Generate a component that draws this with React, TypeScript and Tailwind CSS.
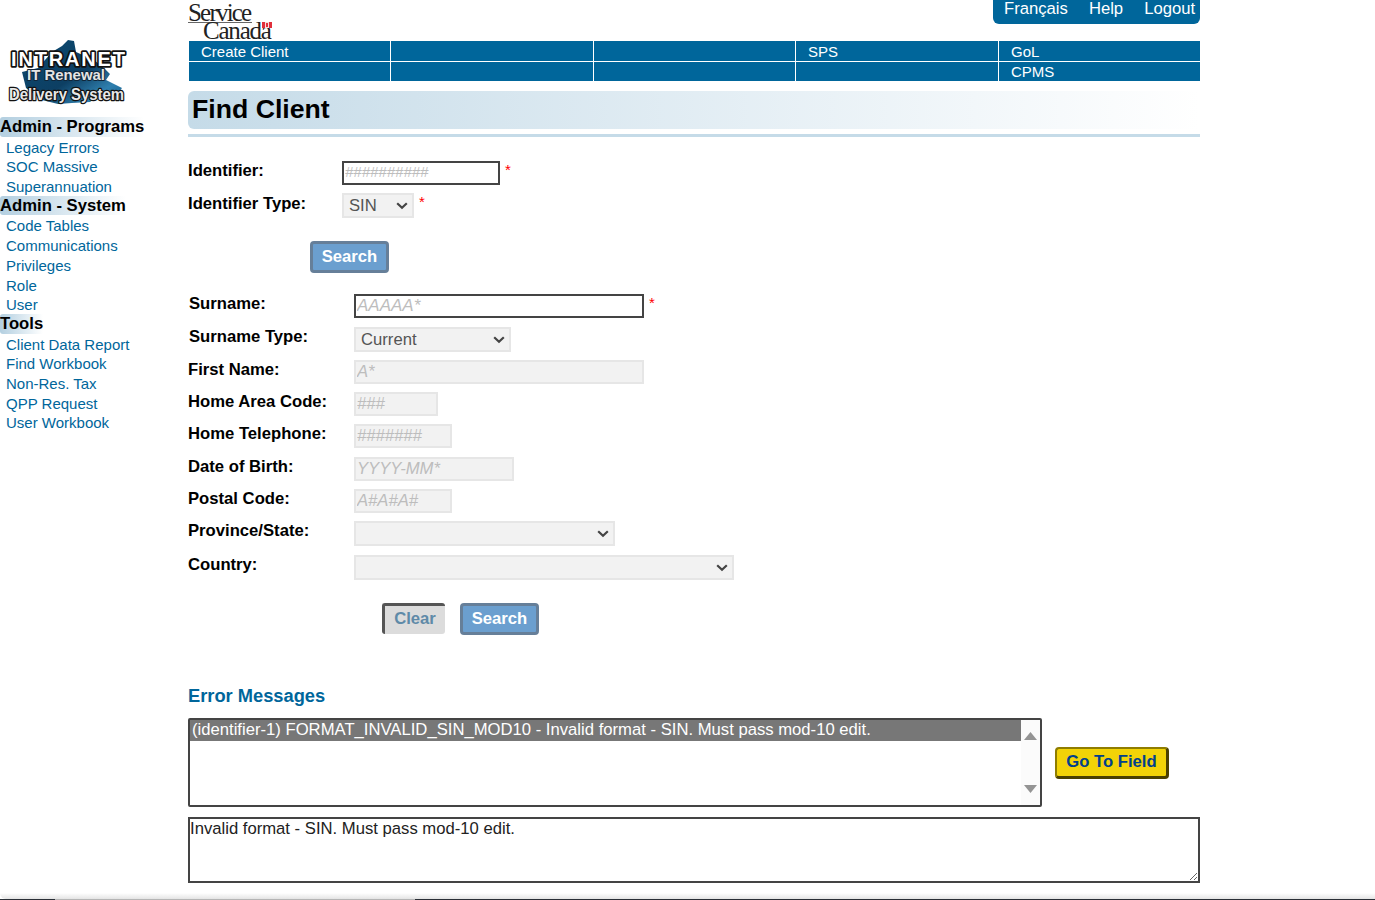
import React from 'react';

const sections = [
  { title: 'Admin - Programs', links: ['Legacy Errors', 'SOC Massive', 'Superannuation'] },
  { title: 'Admin - System', links: ['Code Tables', 'Communications', 'Privileges', 'Role', 'User'] },
  { title: 'Tools', links: ['Client Data Report', 'Find Workbook', 'Non-Res. Tax', 'QPP Request', 'User Workbook'] },
];

const navTop = ['Create Client', '', '', 'SPS', 'GoL'];
const navBottom = ['', '', '', '', 'CPMS'];

const fieldClass = 'h-full border-2 border-[#e6e6e6] bg-[#f2f2f2] px-[1px] text-[16.67px] italic placeholder:text-[#bdbdbd] outline-none';
const btnBlue = 'h-[32px] w-[79px] rounded-[4px] border-[3px] border-[#667f99] bg-[#6b9fcf] text-[16.67px] font-bold text-white';

function IntranetLogo() {
  return (
    <svg width="122" height="68" viewBox="0 0 122 68" className="ml-[6px] block">
      <defs>
        <linearGradient id="map" x1="0" y1="0" x2="1" y2="1">
          <stop offset="0" stopColor="#0b4a72" />
          <stop offset="0.55" stopColor="#0d3f63" />
          <stop offset="0.8" stopColor="#2f7fae" />
          <stop offset="1" stopColor="#0f5c8a" />
        </linearGradient>
      </defs>
      <path
        d="M16 34 L32 30 L46 14 L56 8 L62 2 L68 3 L70 14 L88 22 L98 30 L104 36 L100 42 L116 50 L110 58 L96 56 L84 64 L66 65 L52 66 L36 62 L20 50 Z"
        fill="url(#map)"
      />
      <g fontFamily="'Liberation Sans', sans-serif" fontWeight="700" paintOrder="stroke" strokeLinejoin="round">
        <text x="5" y="28" fontSize="20" textLength="114" lengthAdjust="spacing" fill="#ffffff" stroke="#111111" strokeWidth="3.5">INTRANET</text>
        <text x="21" y="42" fontSize="14.5" textLength="78" lengthAdjust="spacingAndGlyphs" fill="#e4e4e4" stroke="#10263a" strokeWidth="2">IT Renewal</text>
        <text x="3" y="62" fontSize="16" textLength="115" lengthAdjust="spacingAndGlyphs" fill="#e8e8e8" stroke="#111111" strokeWidth="2.5">Delivery System</text>
      </g>
    </svg>
  );
}

function Sidebar() {
  return (
    <aside className="w-[188px] shrink-0 pt-[38px]">
      <IntranetLogo />
      <div className="mt-[11px]">
        {sections.map((s) => (
          <div key={s.title}>
            <div className="h-[19.7px] w-fit rounded-l-[3px] bg-gradient-to-r from-[#b3cfe0] to-white text-[16.67px] font-bold leading-[19.7px] text-black">
              {s.title}
            </div>
            {s.links.map((l) => (
              <a key={l} className="block h-[19.7px] pl-[6px] text-[15px] leading-[21px] text-[#00669b]">
                {l}
              </a>
            ))}
          </div>
        ))}
      </div>
    </aside>
  );
}

function Header() {
  return (
    <div className="flex h-[41px] items-start justify-between">
      <div className="font-['Liberation_Serif',serif] text-[25px] leading-[18px] text-[#222222]">
        <div className="mt-[4px] h-[19px] w-[64px] border-b border-[#666666] tracking-[-1.8px]">Service</div>
        <div className="relative ml-[15px] mt-[-1px] w-[69px] tracking-[-1.2px]">
          Canada
          <svg width="10" height="6" viewBox="0 0 10 6" className="absolute right-0 top-0">
            <rect width="10" height="6" fill="#f6dcdc" />
            <rect width="3" height="6" fill="#e0303c" />
            <rect x="7" width="3" height="6" fill="#e0303c" />
            <rect x="4" y="1" width="2" height="4" fill="#e0303c" />
          </svg>
        </div>
      </div>
      <div className="flex h-[24px] w-[207px] items-start gap-[21px] rounded-b-[6px] bg-[#00669b] pl-[11px] text-[16.67px] leading-[18px] text-white">
        <span>Français</span>
        <span>Help</span>
        <span>Logout</span>
      </div>
    </div>
  );
}

function Nav() {
  return (
    <div className="ml-[1px] grid grid-cols-[201px_202px_201px_202px_201px] grid-rows-[20px_19px] gap-px bg-white">
      {navTop.map((c, i) => (
        <div key={i} className="bg-[#00669b] pl-[12px] text-[15px] leading-[21px] text-white">
          {c}
        </div>
      ))}
      {navBottom.map((c, i) => (
        <div key={i} className="bg-[#00669b] pl-[12px] text-[15px] leading-[19px] text-white">
          {c}
        </div>
      ))}
    </div>
  );
}

function Label({ w, children }: { w: string; children: React.ReactNode }) {
  return <label className={`${w} shrink-0 self-start pt-[1px] text-[16.67px] font-bold leading-[18px] text-black`}>{children}</label>;
}

function Star() {
  return <span className="ml-[5px] self-start text-[15px] leading-[18px] text-[#ff0000]">*</span>;
}

function Row({ mt, h, children }: { mt: string; h: string; children: React.ReactNode }) {
  return <div className={`${mt} ${h} flex items-center`}>{children}</div>;
}

function Select({ w, value }: { w: string; value?: string }) {
  return (
    <div className={`${w} relative h-full border-2 border-[#e6e6e6] bg-[#f2f2f2]`}>
      <select className="mt-[-2px] block h-[21px] w-full appearance-none pl-[5px] text-[16.67px] text-[#555555]" defaultValue={value}>
        {value && <option>{value}</option>}
      </select>
      <svg width="12" height="8" viewBox="0 0 12 8" className="pointer-events-none absolute right-[4px] top-[7px]">
        <path d="M1.2 1.2 L6 5.8 L10.8 1.2" fill="none" stroke="#444444" strokeWidth="2.2" />
      </svg>
    </div>
  );
}

function Form() {
  return (
    <div>
      <Row mt="mt-[24px]" h="h-[24px]">
        <Label w="w-[154px]">Identifier:</Label>
        <input placeholder="##########" className="h-full w-[158px] border-2 border-[#444444] bg-white px-[1px] pb-[3px] text-[15px] italic outline-none placeholder:text-[#bdbdbd]" />
        <Star />
      </Row>
      <Row mt="mt-[8px]" h="h-[25px]">
        <Label w="w-[154px] pt-[2px]">Identifier Type:</Label>
        <Select w="w-[72px]" value="SIN" />
        <Star />
      </Row>
      <div className="mt-[23px] pl-[122px]">
        <button className={`${btnBlue} pb-[2px]`}>Search</button>
      </div>
      <Row mt="mt-[21px]" h="h-[24px]">
        <Label w="w-[166px] pl-[1px]">Surname:</Label>
        <input placeholder="AAAAA*" className="h-full w-[290px] border-2 border-[#444444] bg-white px-[1px] text-[17px] italic outline-none placeholder:text-[#bdbdbd]" />
        <Star />
      </Row>
      <Row mt="mt-[9px]" h="h-[25px]">
        <Label w="w-[166px] pl-[1px]">Surname Type:</Label>
        <Select w="w-[157px]" value="Current" />
      </Row>
      <Row mt="mt-[8px]" h="h-[24px]">
        <Label w="w-[166px]">First Name:</Label>
        <input placeholder="A*" className={`${fieldClass} w-[290px]`} />
      </Row>
      <Row mt="mt-[8px]" h="h-[24px]">
        <Label w="w-[166px]">Home Area Code:</Label>
        <input placeholder="###" className={`${fieldClass} w-[84px]`} />
      </Row>
      <Row mt="mt-[8px]" h="h-[24px]">
        <Label w="w-[166px]">Home Telephone:</Label>
        <input placeholder="#######" className={`${fieldClass} w-[98px]`} />
      </Row>
      <Row mt="mt-[9px]" h="h-[24px]">
        <Label w="w-[166px]">Date of Birth:</Label>
        <input placeholder="YYYY-MM*" className={`${fieldClass} w-[160px]`} />
      </Row>
      <Row mt="mt-[8px]" h="h-[24px]">
        <Label w="w-[166px]">Postal Code:</Label>
        <input placeholder="A#A#A#" className={`${fieldClass} w-[98px]`} />
      </Row>
      <Row mt="mt-[8px]" h="h-[25px]">
        <Label w="w-[166px]">Province/State:</Label>
        <Select w="w-[261px]" />
      </Row>
      <Row mt="mt-[9px]" h="h-[25px]">
        <Label w="w-[166px]">Country:</Label>
        <Select w="w-[380px]" />
      </Row>
      <div className="mt-[23px] flex items-start gap-[15px] pl-[194px]">
        <button className="h-[31px] w-[63px] rounded-[3px] border-l-[3px] border-t-[3px] border-[#555555] bg-[#dcdcdc] pb-[6px] text-[16.67px] font-bold text-[#5f8aa8]">
          Clear
        </button>
        <button className={`${btnBlue} pb-[3px]`}>Search</button>
      </div>
    </div>
  );
}

function Errors() {
  return (
    <div className="mt-[50px]">
      <h2 className="h-[21px] text-[18.3px] font-bold leading-[21px] text-[#00669b]">Error Messages</h2>
      <div className="mt-[12px] flex items-center">
        <div className="flex h-[89px] w-[854px] rounded-[2px] border-2 border-[#444444] bg-white">
          <div className="flex-1">
            <div className="h-[21px] bg-[#777777] pl-[2px] text-[16.67px] leading-[20px] text-white">
              (identifier-1) FORMAT_INVALID_SIN_MOD10 - Invalid format - SIN. Must pass mod-10 edit.
            </div>
          </div>
          <div className="flex w-[19px] flex-col items-center justify-between bg-[#fbfbfb] py-[12px]">
            <svg width="13" height="8" viewBox="0 0 13 8"><path d="M6.5 0 L13 8 L0 8 Z" fill="#949494" /></svg>
            <svg width="13" height="8" viewBox="0 0 13 8"><path d="M0 0 L13 0 L6.5 8 Z" fill="#949494" /></svg>
          </div>
        </div>
        <button className="ml-[13px] h-[32px] w-[114px] rounded-[4px] border-[2px] border-b-[3px] border-r-[3px] border-[#8f7d00] border-b-[#4a4000] border-r-[#4a4000] bg-[#f2d307] pb-[2px] text-[16.67px] font-bold text-[#00408c]">
          Go To Field
        </button>
      </div>
      <textarea
        readOnly
        value="Invalid format - SIN. Must pass mod-10 edit."
        className="mt-[10px] block h-[66px] w-[1012px] border-2 border-[#444444] bg-white pt-[1px] text-[16.67px] leading-[18px] text-[#222222] outline-none"
      />
    </div>
  );
}

export default function App() {
  return (
    <div className="h-[900px] overflow-hidden bg-white font-['Liberation_Sans',Arial,sans-serif]">
      <div className="flex h-[893px] bg-white">
        <Sidebar />
        <main className="w-[1012px]">
          <Header />
          <Nav />
          <div className="mt-[10px] flex h-[38px] items-center rounded-l-[6px] bg-gradient-to-r from-[#c5dbe8] to-white pb-[2px] pl-[4px] text-[26.67px] font-bold text-black">
            Find Client
          </div>
          <div className="mt-[5px] h-[3px] bg-[#c5dbe8]" />
          <Form />
          <Errors />
        </main>
      </div>
      <div className="h-[6px] rounded-bl-[12px] bg-gradient-to-b from-white to-[#e4e4e4]" />
      <div className="flex h-[1px]">
        <div className="w-[55px] bg-[#2a2f36]" />
        <div className="w-[360px] bg-[#b5b5b5]" />
        <div className="flex-1 bg-[#2a2f36]" />
      </div>
    </div>
  );
}
